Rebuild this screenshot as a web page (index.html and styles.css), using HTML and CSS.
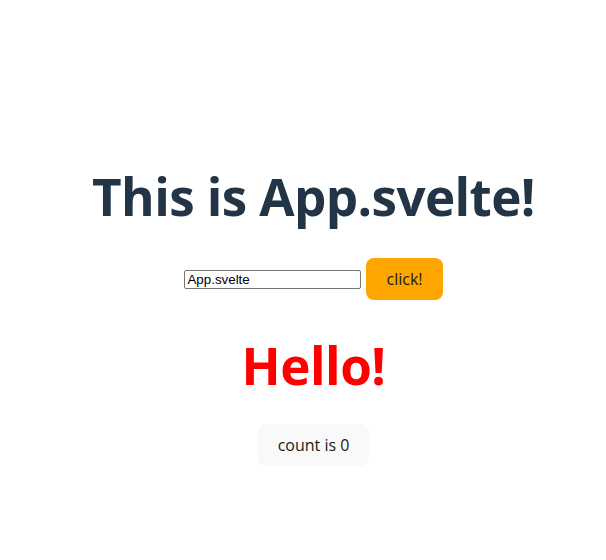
FILE: index.html
```html
<!DOCTYPE html>
<html lang="en">
<head>
<meta charset="utf-8">
<title>Vite + Svelte</title>
<link rel="stylesheet" href="styles.css">
</head>
<body>
<div class="app">
  <main class="main">
    <h1 class="title">This is App.svelte!</h1>
    <div class="row">
      <input class="field" type="text" value="App.svelte">
      <button class="btn btn-orange">click!</button>
    </div>
    <h1 class="hello">Hello!</h1>
    <div class="card">
      <button class="btn btn-count">count is 0</button>
    </div>
  </main>
</div>
</body>
</html>
```

FILE: styles.css
```css
html, body {
  margin: 0;
  padding: 0;
}
body {
  font-family: "Open Sans", "Noto Sans", sans-serif;
  font-size: 16px;
  line-height: 1.5;
  color: #213547;
  background: #ffffff;
  display: flex;
  place-items: center;
  min-width: 320px;
  min-height: 100vh;
}
.app {
  max-width: 1280px;
  margin: 0 auto;
  padding: 72px 32px 32px 53px;
  text-align: center;
}
.title {
  font-size: 51.2px;
  line-height: 1.1;
  font-weight: 700;
  letter-spacing: -0.6px;
  margin: 34px 0;
  color: #213547;
}
.row {
  display: flex;
  justify-content: center;
  align-items: center;
  gap: 5px;
}
.field {
  font-family: "Liberation Sans", Arial, sans-serif;
  font-size: 13.33px;
  width: 171px;
  height: 15px;
  padding: 1px 2px;
  border: 1px solid #767676;
  border-radius: 2px;
  color: #000;
}
.btn {
  border-radius: 8px;
  border: 1px solid transparent;
  padding: 8px 19px;
  font-size: 16px;
  font-weight: 400;
  font-family: inherit;
  line-height: 24px;
  cursor: pointer;
  color: #1a1a1a;
}
.btn-orange {
  background: #ffa500;
}
.btn-count {
  background: #f9f9f9;
}
.hello {
  font-size: 51.2px;
  line-height: 1.1;
  font-weight: 700;
  letter-spacing: -0.5px;
  margin: 37px 0 31px;
  color: #ff0000;
}
.card {
  padding: 0;
}
```
